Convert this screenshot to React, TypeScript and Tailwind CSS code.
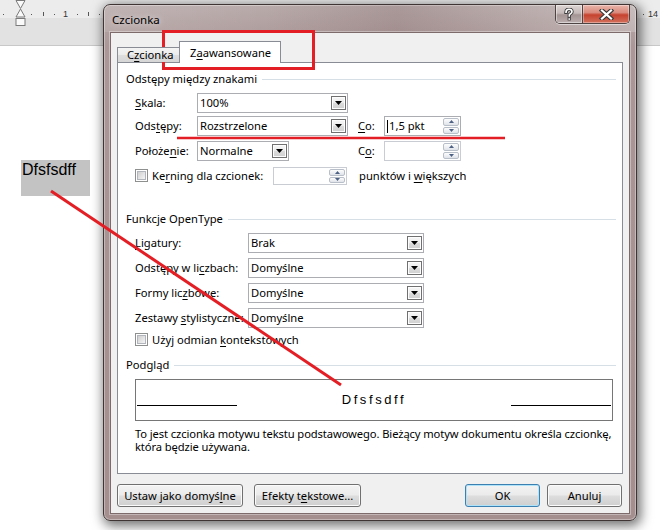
import React from "react";

function U({ c }: { c: string }) {
  return <span className="underline decoration-1 underline-offset-[2px]">{c}</span>;
}

function Select({ w, value }: { w: string; value: string }) {
  return (
    <div className={`flex h-[20px] shrink-0 items-center border border-[#abadb3] bg-white ${w}`}>
      <span className="flex-1 whitespace-nowrap pl-[2px] leading-[14px]">{value}</span>
      <div className="mr-px flex h-[14px] w-[15px] items-center justify-center border border-[#707070] bg-[linear-gradient(180deg,#f7f7f7_0%,#ececec_50%,#dcdcdc_51%,#d0d0d0_100%)] shadow-[inset_0_0_0_1px_#fdfdfd]">
        <svg width="7" height="4" viewBox="0 0 7 4">
          <path d="M0 0H7L3.5 4Z" fill="#000" />
        </svg>
      </div>
    </div>
  );
}

function SpinBtn({ up }: { up?: boolean }) {
  return (
    <div className="flex flex-1 items-center justify-center rounded-[2px] border border-[#b9bfc9] bg-[linear-gradient(180deg,#fdfdfd_0%,#eef0f3_50%,#dfe3e9_100%)]">
      <svg width="5" height="3" viewBox="0 0 5 3">
        <path d={up ? "M0 3H5L2.5 0Z" : "M0 0H5L2.5 3Z"} fill="#4d6185" />
      </svg>
    </div>
  );
}

function Spin({
  w,
  h,
  value,
  disabled,
  caret,
}: {
  w: string;
  h: string;
  value?: string;
  disabled?: boolean;
  caret?: boolean;
}) {
  return (
    <div
      className={`flex shrink-0 border bg-white ${disabled ? "border-[#c9cdd3]" : "border-[#abadb3]"} ${w} ${h}`}
    >
      <div className="flex flex-1 items-center whitespace-nowrap pl-[2px] leading-[14px]">
        {caret && <span className="mr-[1px] h-[13px] w-px bg-black" />}
        {value}
      </div>
      <div className="flex w-[17px] flex-col gap-px py-px pr-px">
        <SpinBtn up />
        <SpinBtn />
      </div>
    </div>
  );
}

function Check() {
  return (
    <div className="flex h-[13px] w-[13px] shrink-0 items-center justify-center border border-[#8e8f8f] bg-white">
      <div className="h-[9px] w-[9px] border border-[#b2b6bc] bg-[linear-gradient(135deg,#cfcfcf_0%,#f5f5f5_100%)]" />
    </div>
  );
}

function Group({ title }: { title: string }) {
  return (
    <div className="flex h-[14px] items-center pl-[8px] pr-[6px]">
      <span className="whitespace-nowrap leading-[14px]">{title}</span>
      <div className="ml-[5px] h-px flex-1 bg-[#d5dfe5]" />
    </div>
  );
}

function Btn({ w, children, def }: { w: string; children: React.ReactNode; def?: boolean }) {
  return (
    <div
      className={`flex h-[23px] shrink-0 items-center justify-center rounded-[3px] border bg-[linear-gradient(180deg,#f3f3f3_0%,#ebebeb_48%,#dddddd_52%,#cfcfcf_100%)] ${
        def
          ? "border-[#3c7fb1] shadow-[inset_0_0_0_1px_#aee3fa]"
          : "border-[#707070] shadow-[inset_0_0_0_1px_#fbfbfb]"
      } ${w}`}
    >
      <span className="whitespace-nowrap leading-[14px]">{children}</span>
    </div>
  );
}

function Ruler() {
  const dots = [3, 31, 54, 77, 99, 643];
  const ticks = [43, 88];
  return (
    <div className="h-[46px] bg-[linear-gradient(180deg,#ececec_0px,#ececec_18px,#e2e2e2_18px,#e2e2e2_45px,#c8c8c8_45px,#c8c8c8_46px)]">
      <svg width="660" height="46" className="block">
        {dots.map((x) => (
          <rect key={x} x={x} y={14} width={1} height={1} fill="#555" />
        ))}
        {ticks.map((x) => (
          <rect key={x} x={x} y={12} width={1} height={4} fill="#555" />
        ))}
        <text x={63} y={17} fontSize={9} fill="#333" fontFamily="Liberation Sans, sans-serif">
          1
        </text>
        <text x={648} y={17} fontSize={9} fill="#333" fontFamily="Liberation Sans, sans-serif">
          14
        </text>
        <path d="M16 0.5H25L20.5 8.5Z" fill="#fafafa" stroke="#7a7a7a" />
        <path d="M20.5 9L25 17H16Z" fill="#fafafa" stroke="#7a7a7a" />
        <rect x={16} y={18.5} width={9} height={7} fill="#fafafa" stroke="#7a7a7a" />
      </svg>
    </div>
  );
}

function TitleButtons() {
  return (
    <div className="mr-[6px] flex h-[19px] self-start overflow-hidden rounded-b-[5px] border border-t-0 border-[#4f4444] shadow-[0_1px_0_rgba(255,255,255,0.5)]">
      <div className="flex w-[27px] items-center justify-center border-r border-[#4f4444] bg-[linear-gradient(180deg,#ddd4d4_0%,#c5b9b9_45%,#a49494_55%,#bcafaf_100%)] shadow-[inset_0_0_0_1px_rgba(255,255,255,0.45)]">
        <svg width="10" height="13" viewBox="0 0 10 13">
          <path d="M2 4.2C2 2.2 3.3 1.3 5 1.3C6.8 1.3 8 2.3 8 3.8C8 5.4 6.2 5.8 5.3 6.8V8" fill="none" stroke="#3d3d3d" strokeWidth="3.4" strokeLinecap="square" />
          <rect x="3.6" y="9.6" width="3.2" height="2.8" fill="#3d3d3d" />
          <path d="M2 4.2C2 2.2 3.3 1.3 5 1.3C6.8 1.3 8 2.3 8 3.8C8 5.4 6.2 5.8 5.3 6.8V8" fill="none" stroke="#fff" strokeWidth="1.6" strokeLinecap="square" />
          <rect x="4.4" y="10.3" width="1.6" height="1.5" fill="#fff" />
        </svg>
      </div>
      <div className="flex w-[46px] items-center justify-center bg-[linear-gradient(180deg,#e9b5ab_0%,#d98a7c_42%,#c6432f_55%,#d2705c_100%)] shadow-[inset_0_0_0_1px_rgba(255,255,255,0.35)]">
        <svg width="15" height="11" viewBox="0 0 15 11">
          <path d="M3 1.5L12 9.5M12 1.5L3 9.5" stroke="#3a3a3a" strokeWidth="4.4" strokeLinecap="square" />
          <path d="M3 1.5L12 9.5M12 1.5L3 9.5" stroke="#fff" strokeWidth="2.2" strokeLinecap="square" />
        </svg>
      </div>
    </div>
  );
}

function Dialog() {
  return (
    <div className="absolute left-[103px] top-[4px] flex h-[517px] w-[534px] flex-col rounded-[7px] border border-[#3f3535] bg-[linear-gradient(180deg,#b9abab_0px,#ab9797_40px,#a48e8e_100%)] shadow-[inset_0_0_0_1px_rgba(255,255,255,0.35),2px_3px_12px_2px_rgba(0,0,0,0.55)]">
      {/* title bar */}
      <div className="flex h-[27px] rounded-t-[6px] bg-[linear-gradient(90deg,rgba(255,255,255,0.12)_0%,rgba(255,255,255,0)_30%,rgba(70,30,30,0.12)_55%,rgba(255,255,255,0.05)_80%,rgba(255,255,255,0.22)_100%)]">
        <span className="self-center pl-[8px] pt-[2px] text-[11.5px] leading-[14px] text-black [text-shadow:0_0_6px_rgba(255,255,255,0.8)]">
          Czcionka
        </span>
        <div className="flex-1" />
        <TitleButtons />
      </div>

      {/* client */}
      <div className="mx-[6px] flex h-[482px] flex-col border border-[#7d6a6a] bg-[#f0f0f0] shadow-[0_0_0_1px_rgba(255,255,255,0.35)]">
        {/* tabs */}
        <div className="relative z-10 ml-[6px] mt-[8px] flex h-[21px] items-end">
          <div className="flex h-[15px] w-[63px] items-center border border-b-0 border-[#898c95] bg-[linear-gradient(180deg,#f4f4f4_0%,#ebebeb_50%,#dedede_51%,#d6d6d6_100%)] pl-[9px]">
            <span className="leading-[14px]">
              C<U c="z" />cionka
            </span>
          </div>
          <div className="-mb-px -ml-px flex h-[22px] w-[102px] items-start border border-b-0 border-[#898c95] bg-white pl-[10px] pt-[4px]">
            <span className="leading-[14px]">
              Z<U c="a" />awansowane
            </span>
          </div>
        </div>

        {/* panel */}
        <div className="ml-[6px] flex h-[412px] w-[506px] flex-col border border-[#898c95] bg-white">
          <div className="mt-[9px]">
            <Group title="Odstępy między znakami" />
          </div>

          <div className="flex flex-col pl-[17px]">
            <div className="mt-[7px] flex h-[20px] items-center">
              <span className="w-[62px] shrink-0">
                <U c="S" />kala:
              </span>
              <Select w="w-[151px]" value="100%" />
            </div>
            <div className="mt-[3px] flex h-[20px] items-center">
              <span className="w-[62px] shrink-0">
                Ods<U c="t" />ępy:
              </span>
              <Select w="w-[151px]" value="Rozstrzelone" />
              <span className="ml-[10px] w-[26px] shrink-0">
                <U c="C" />o:
              </span>
              <Spin w="w-[77px]" h="h-[20px]" value="1,5 pkt" caret />
            </div>
            <div className="mt-[5px] flex h-[20px] items-center">
              <span className="w-[62px] shrink-0">
                Położe<U c="n" />ie:
              </span>
              <Select w="w-[92px]" value="Normalne" />
              <span className="ml-[69px] w-[26px] shrink-0">
                C<U c="o" />:
              </span>
              <Spin w="w-[77px]" h="h-[20px]" disabled />
            </div>
            <div className="mt-[6px] flex h-[18px] items-center">
              <div className="flex w-[138px] shrink-0 items-center">
                <Check />
                <span className="ml-[4px] whitespace-nowrap">
                  Ke<U c="r" />ning dla czcionek:
                </span>
              </div>
              <Spin w="w-[74px]" h="h-[18px]" disabled />
              <span className="ml-[12px] whitespace-nowrap">
                punktów i <U c="w" />iększych
              </span>
            </div>
          </div>

          <div className="mt-[27px]">
            <Group title="Funkcje OpenType" />
          </div>

          <div className="flex flex-col pl-[17px]">
            <div className="mt-[7px] flex h-[20px] items-center">
              <span className="w-[113px] shrink-0">
                <U c="L" />igatury:
              </span>
              <Select w="w-[176px]" value="Brak" />
            </div>
            <div className="mt-[5px] flex h-[20px] items-center">
              <span className="w-[113px] shrink-0 whitespace-nowrap">
                Odstępy w li<U c="c" />zbach:
              </span>
              <Select w="w-[176px]" value="Domyślne" />
            </div>
            <div className="mt-[5px] flex h-[20px] items-center">
              <span className="w-[113px] shrink-0 whitespace-nowrap">
                Formy lic<U c="z" />bowe:
              </span>
              <Select w="w-[176px]" value="Domyślne" />
            </div>
            <div className="mt-[5px] flex h-[20px] items-center">
              <span className="w-[113px] shrink-0 whitespace-nowrap">
                Zestawy <U c="s" />tylistyczne:
              </span>
              <Select w="w-[176px]" value="Domyślne" />
            </div>
            <div className="mt-[5px] flex h-[13px] items-center">
              <Check />
              <span className="ml-[4px] whitespace-nowrap leading-[14px]">
                Użyj odmian <U c="k" />ontekstowych
              </span>
            </div>
          </div>

          <div className="mt-[12px]">
            <Group title="Podgląd" />
          </div>

          <div className="ml-[17px] mt-[7px] flex h-[42px] w-[478px] justify-between border border-[#767676] px-px">
            <div className="mt-[25px] h-px w-[100px] bg-black" />
            <span className="mt-[12px] font-['Liberation_Sans',sans-serif] text-[13px] leading-[16px] tracking-[2.6px]">
              Dfsfsdff
            </span>
            <div className="mt-[25px] h-px w-[100px] bg-black" />
          </div>

          <div className="ml-[17px] mt-[6px] flex flex-col whitespace-nowrap leading-[13px] tracking-[-0.1px]">
            <span>To jest czcionka motywu tekstu podstawowego. Bieżący motyw dokumentu określa czcionkę,</span>
            <span>która będzie używana.</span>
          </div>
        </div>

        {/* buttons */}
        <div className="ml-[6px] mr-[7px] mt-[10px] flex">
          <Btn w="w-[126px]">
            Ustaw jako domyś<U c="l" />ne
          </Btn>
          <div className="ml-[11px]">
            <Btn w="w-[107px]">
              Efekty t<U c="e" />kstowe...
            </Btn>
          </div>
          <div className="flex-1" />
          <Btn w="w-[75px]" def>
            OK
          </Btn>
          <div className="ml-[7px]">
            <Btn w="w-[75px]">Anuluj</Btn>
          </div>
        </div>
      </div>
    </div>
  );
}

export default function App() {
  return (
    <div className="relative h-[530px] w-[660px] overflow-hidden bg-white font-['Noto_Sans','Open_Sans',sans-serif] text-[11.2px] text-black">
      <Ruler />
      <div className="ml-[21px] mt-[114px] h-[36px] w-[69px] bg-[#c3c3c3] pl-px font-['Liberation_Sans',sans-serif] text-[16px] leading-[19px]">
        Dfsfsdff
      </div>

      <Dialog />

      <svg
        width="660"
        height="530"
        className="pointer-events-none absolute left-0 top-0"
      >
        <rect x="163.5" y="31.5" width="150" height="37" fill="none" stroke="#e31e24" strokeWidth="3" />
        <line x1="177" y1="138" x2="505" y2="138" stroke="#e31e24" strokeWidth="2.5" />
        <line x1="51" y1="191" x2="341" y2="385" stroke="#e31e24" strokeWidth="3" />
      </svg>
    </div>
  );
}
